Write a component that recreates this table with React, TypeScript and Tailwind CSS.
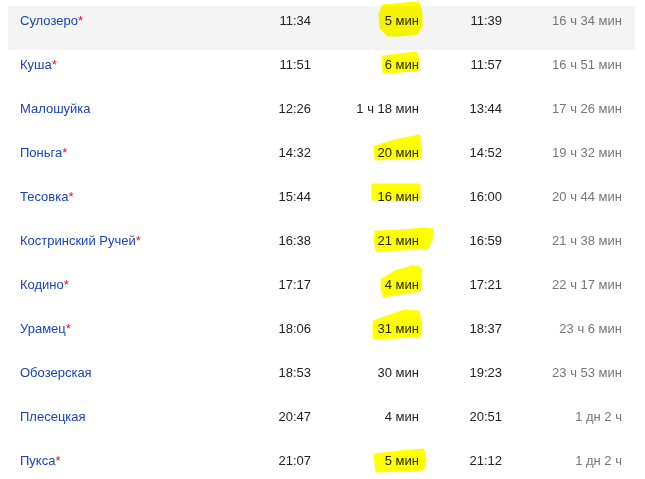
import React from "react";

type Row = { name: string; star: boolean; arr: string; stop: string; dep: string; total: string };

const rows: Row[] = [
  { name: "Сулозеро", star: true, arr: "11:34", stop: "5 мин", dep: "11:39", total: "16 ч 34 мин" },
  { name: "Куша", star: true, arr: "11:51", stop: "6 мин", dep: "11:57", total: "16 ч 51 мин" },
  { name: "Малошуйка", star: false, arr: "12:26", stop: "1 ч 18 мин", dep: "13:44", total: "17 ч 26 мин" },
  { name: "Поньга", star: true, arr: "14:32", stop: "20 мин", dep: "14:52", total: "19 ч 32 мин" },
  { name: "Тесовка", star: true, arr: "15:44", stop: "16 мин", dep: "16:00", total: "20 ч 44 мин" },
  { name: "Костринский Ручей", star: true, arr: "16:38", stop: "21 мин", dep: "16:59", total: "21 ч 38 мин" },
  { name: "Кодино", star: true, arr: "17:17", stop: "4 мин", dep: "17:21", total: "22 ч 17 мин" },
  { name: "Урамец", star: true, arr: "18:06", stop: "31 мин", dep: "18:37", total: "23 ч 6 мин" },
  { name: "Обозерская", star: false, arr: "18:53", stop: "30 мин", dep: "19:23", total: "23 ч 53 мин" },
  { name: "Плесецкая", star: false, arr: "20:47", stop: "4 мин", dep: "20:51", total: "1 дн 2 ч" },
  { name: "Пукса", star: true, arr: "21:07", stop: "5 мин", dep: "21:12", total: "1 дн 2 ч" },
];

const marks = [
  "M383,6 L405,4 L418,3 L421,12 L421,26 L417,33 L400,35 L388,35 L381,28 L380,14 Z",
  "M383,57 L400,55 L416,53 L418,60 L417,70 L400,71 L384,72 Z",
  "M375,147 L395,141 L419,136 L420,157 L398,158 L376,159 Z",
  "M373,185 L419,185 L419,199 L373,199 Z",
  "M376,232 L400,231 L425,229 L432,230 L431,240 L427,248 L400,249 L377,250 L375,240 Z",
  "M382,280 L395,272 L412,267 L420,268 L420,290 L400,293 L384,296 L382,288 Z",
  "M374,322 L390,316 L405,311 L418,312 L421,325 L419,336 L395,337 L374,338 Z",
  "M375,455 L400,452 L423,450 L425,460 L423,469 L400,470 L377,471 Z",
];

export default function App() {
  return (
    <div
      className="relative w-[645px] h-[479px] bg-white overflow-hidden text-[13px] leading-[16px]"
      style={{ fontFamily: '"Liberation Sans", Arial, sans-serif' }}
    >
      <div className="pt-[6px] pl-[8px] pr-[10px]">
        {rows.map((r, i) => (
          <div
            key={i}
            className={`flex h-[44px] pt-[7px] ${i === 0 ? "bg-[#f4f4f4]" : ""}`}
          >
            <div className="w-[243px] pl-[12px] text-[#1a44b4]">
              {r.name}
              {r.star && <span className="text-[#d8162b]">*</span>}
            </div>
            <div className="w-[60px] text-right text-[#222]">{r.arr}</div>
            <div className="w-[108px] text-right text-[#222]">{r.stop}</div>
            <div className="w-[83px] text-right text-[#222]">{r.dep}</div>
            <div className="w-[120px] text-right text-[#777]">{r.total}</div>
          </div>
        ))}
      </div>
      <svg
        className="absolute left-0 top-0 mix-blend-multiply pointer-events-none"
        width="645"
        height="479"
        viewBox="0 0 645 479"
      >
        {marks.map((d, i) => (
          <path key={i} d={d} fill="#ffff00" stroke="#ffff00" strokeWidth="3" strokeLinejoin="round" />
        ))}
      </svg>
    </div>
  );
}
